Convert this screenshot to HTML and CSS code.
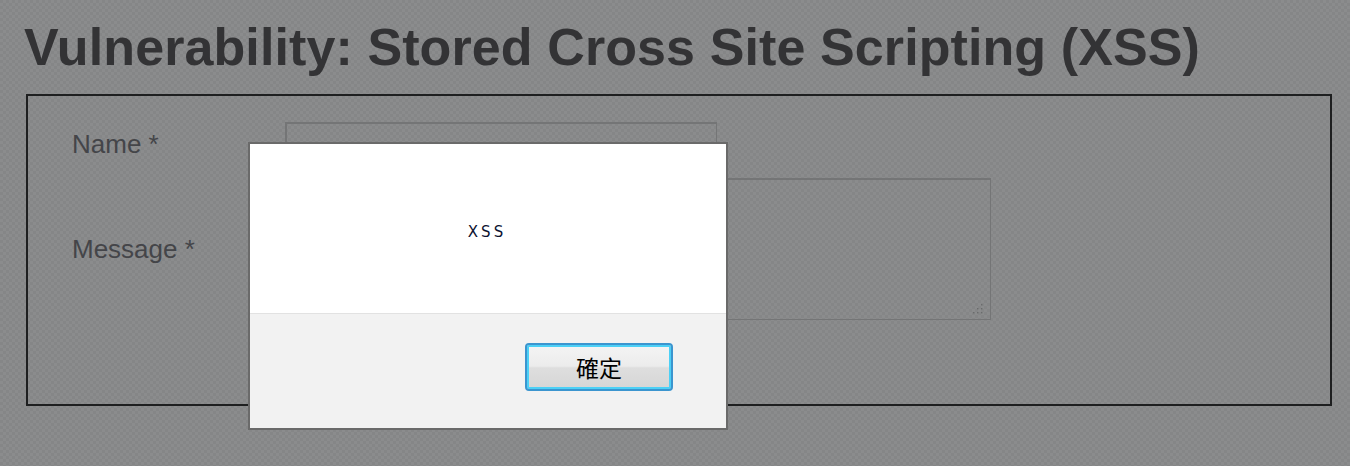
FILE: index.html
```html
<!DOCTYPE html>
<html>
<head>
<meta charset="utf-8">
<link rel="stylesheet" href="styles.css">
</head>
<body>
<div class="page">
  <h1 class="title">Vulnerability: Stored Cross Site Scripting (XSS)</h1>
  <div class="vuln-box">
    <form class="guest-form">
      <label class="field-label">Name *</label>
      <div class="field"><div class="input-name"></div></div>
      <label class="field-label">Message *</label>
      <div class="field">
        <div class="input-message">
          <svg class="grip" width="12" height="12" viewBox="0 0 12 12">
            <rect x="9" y="1" width="1.4" height="1.4"/>
            <rect x="9" y="5" width="1.4" height="1.4"/>
            <rect x="5" y="5" width="1.4" height="1.4"/>
            <rect x="9" y="9" width="1.4" height="1.4"/>
            <rect x="5" y="9" width="1.4" height="1.4"/>
            <rect x="1" y="9" width="1.4" height="1.4"/>
          </svg>
        </div>
      </div>
    </form>
  </div>
</div>
<div class="dialog">
  <div class="dialog-body"><span class="dialog-msg">XSS</span></div>
  <div class="dialog-footer"><button class="dialog-btn">確定</button></div>
</div>
</body>
</html>
```
FILE: styles.css
```css
html, body {
  margin: 0;
  padding: 0;
}
body {
  width: 1350px;
  height: 466px;
  overflow: hidden;
  position: relative;
  background-color: #898a8b;
  background-image: repeating-conic-gradient(#8b8c8d 0 25%, #858687 0 50%);
  background-size: 6px 6px;
  font-family: "Liberation Sans", Arial, sans-serif;
}
.page {
  padding: 21px 0 0 0;
}
.title {
  margin: 0 0 0 24px;
  font-size: 52px;
  line-height: 52px;
  font-weight: bold;
  color: #333335;
  letter-spacing: 0.1px;
}
.vuln-box {
  margin: 21px 0 0 26px;
  width: 1306px;
  height: 312px;
  box-sizing: border-box;
  border: 2px solid #1e1f20;
}
.guest-form {
  display: grid;
  grid-template-columns: 213px auto;
  row-gap: 12px;
  padding: 26px 0 0 44px;
  align-items: center;
}
.field-label {
  font-size: 26px;
  line-height: 30px;
  color: #444549;
}
.input-name {
  width: 432px;
  height: 44px;
  box-sizing: border-box;
  border: 2px solid #747576;
  border-right-width: 1px;
  border-bottom-width: 1px;
}
.input-message {
  position: relative;
  width: 706px;
  height: 142px;
  box-sizing: border-box;
  border: 2px solid #747576;
  border-right-width: 1px;
  border-bottom-width: 1px;
}
.grip {
  position: absolute;
  right: 6px;
  bottom: 4px;
  fill: #6a6b6c;
}
.dialog {
  position: absolute;
  left: 248px;
  top: 142px;
  width: 480px;
  height: 288px;
  box-sizing: border-box;
  border: 2px solid #6a6a6a;
  background: #f2f2f2;
  display: flex;
  flex-direction: column;
}
.dialog-body {
  height: 170px;
  background: #ffffff;
  border-bottom: 1px solid #e2e2e2;
  display: flex;
  justify-content: center;
  padding-top: 79px;
  box-sizing: border-box;
}
.dialog-msg {
  font-family: "DejaVu Sans", sans-serif;
  font-size: 15px;
  line-height: 18px;
  letter-spacing: 3px;
  color: #0c1230;
  padding-right: 2px;
  height: 18px;
}
.dialog-footer {
  display: flex;
  justify-content: flex-end;
  padding: 29px 53px 0 0;
}
.dialog-btn {
  width: 148px;
  height: 48px;
  box-sizing: border-box;
  border: 2px solid #3b95cf;
  border-radius: 4px;
  box-shadow: inset 0 0 0 2px #4cd0f6;
  background: linear-gradient(#f4f4f4 0%, #ececec 48%, #dedede 52%, #d6d6d6 100%);
  font-family: "Noto Sans CJK TC", "Noto Sans CJK JP", sans-serif;
  font-size: 23px;
  color: #000;
  padding: 0;
  line-height: 1;
}
```
